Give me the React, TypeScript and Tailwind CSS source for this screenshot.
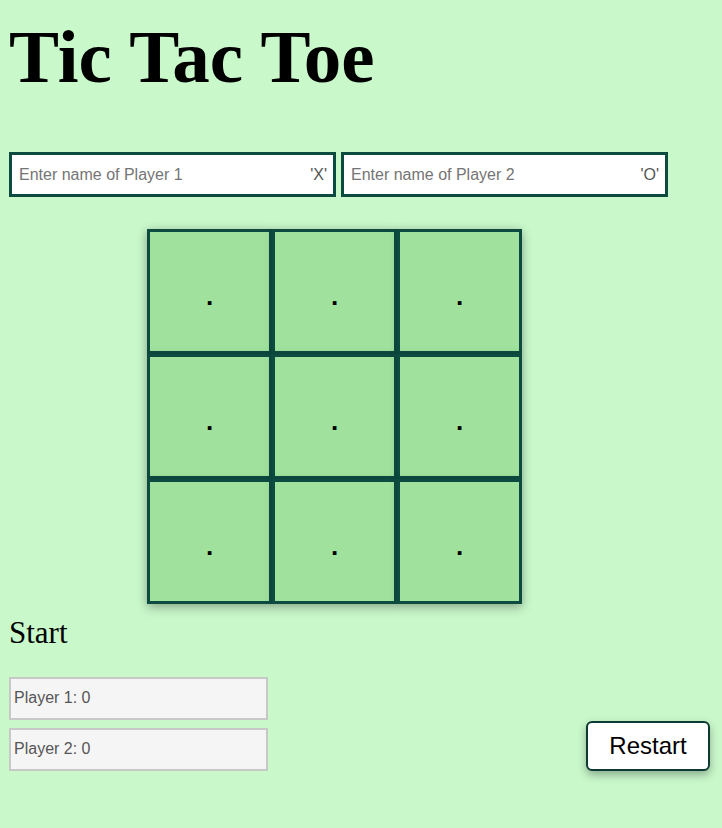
import React from "react";

const cells = [0, 1, 2, 3, 4, 5, 6, 7, 8];

const PlayerInput: React.FC<{ label: string; mark: string }> = ({ label, mark }) => {
    return (
        <div className="flex items-center w-[327px] h-[45px] border-[3px] border-[#0d4a3f] bg-white pl-[7px] pr-[6px]">
            <input
                placeholder={label}
                className="flex-1 min-w-0 text-[16px] text-[#333] placeholder:text-[#757575] focus:outline-none bg-transparent"
            />
            <span className="text-[16px] text-[#555]">{mark}</span>
        </div>
    );
};

const App: React.FC = () => {
    return (
        <main className="min-h-screen bg-[#c9f8cb] px-[9px] pb-10 font-['Liberation_Sans',Arial,sans-serif]">
            <h1 className="pt-[15px] text-[75px] leading-[83px] font-bold font-['Liberation_Serif','Times_New_Roman',serif] text-black">
                Tic Tac Toe
            </h1>

            <div className="flex gap-[5px] mt-[54px]">
                <PlayerInput label="Enter name of Player 1" mark="'X'" />
                <PlayerInput label="Enter name of Player 2" mark="'O'" />
            </div>

            <div className="grid grid-cols-3 w-[375px] ml-[138px] mt-[32px] shadow-[0_4px_10px_rgba(0,0,0,0.25)]">
                {cells.map((c) => (
                    <div
                        key={c}
                        className="h-[125px] flex items-center justify-center pt-[10px] bg-[#9fe19d] border-[3px] border-[#0d4a3f] shadow-[0_0_8px_rgba(0,0,0,0.12)] text-[26px] font-bold text-black"
                    >
                        .
                    </div>
                ))}
            </div>

            <div className="mt-[6px] text-[31px] font-['Liberation_Serif','Times_New_Roman',serif] text-black">
                Start
            </div>

            <div className="flex items-end justify-between mt-[20px]">
                <div className="flex flex-col gap-[8px]">
                    <div className="w-[259px] h-[43px] flex items-center px-[3px] bg-[#f5f5f5] border-2 border-[#c8c8c8] text-[16px] text-[#555]">
                        Player 1: 0
                    </div>
                    <div className="w-[259px] h-[43px] flex items-center px-[3px] bg-[#f5f5f5] border-2 border-[#c8c8c8] text-[16px] text-[#555]">
                        Player 2: 0
                    </div>
                </div>
                <button className="w-[124px] h-[50px] mr-[3px] bg-white border-2 border-[#0d3b33] rounded-[6px] text-[24px] text-black shadow-[0_4px_8px_rgba(0,0,0,0.3)]">
                    Restart
                </button>
            </div>
        </main>
    );
};

export default App;
